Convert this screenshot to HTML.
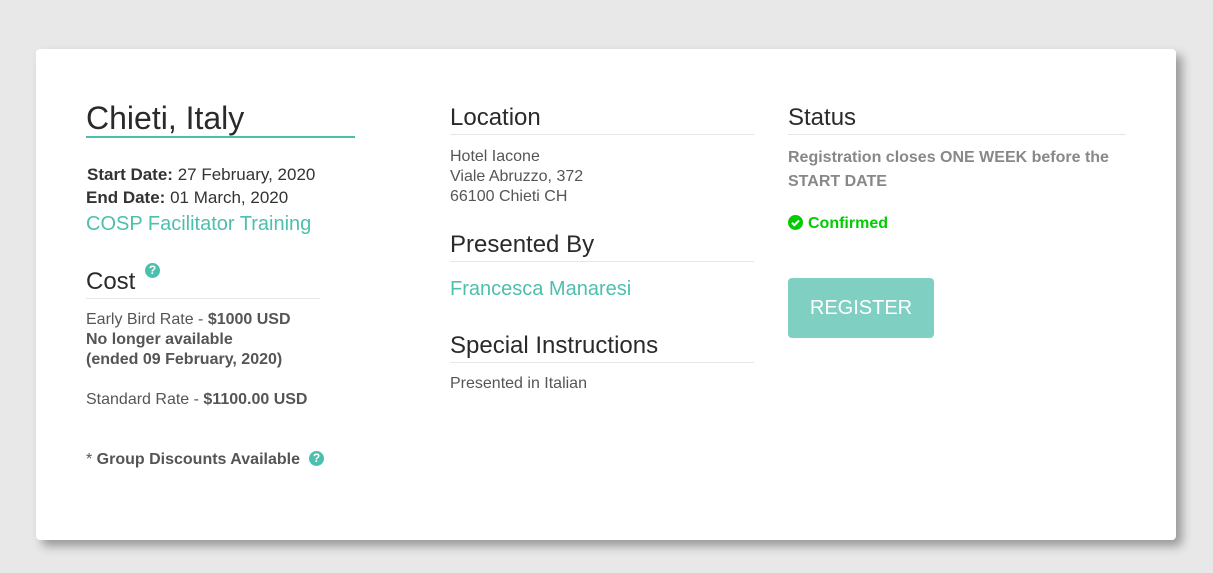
<!DOCTYPE html>
<html><head><meta charset="utf-8"><style>
*{margin:0;padding:0;box-sizing:border-box}
body{width:1213px;height:573px;background:#e8e8e8;font-family:"Liberation Sans",Arial,sans-serif;position:relative;overflow:hidden}
.card{position:absolute;left:36px;top:49px;width:1140px;height:491px;background:#fff;border-radius:4px;box-shadow:6px 6px 10px rgba(0,0,0,.35)}
.t{position:absolute;white-space:nowrap;line-height:1}
.rule{position:absolute;height:1px;background:#e6e6e6}
.q{display:inline-block;width:15px;height:15px;border-radius:50%;background:#4dbfad;color:#fff;font-size:12px;font-weight:bold;text-align:center;line-height:15px;vertical-align:top}
</style></head><body>
<div class="card"></div>

<div class="t" style="left:86px;top:102px;font-size:32px;color:#2a2a2a">Chieti, Italy</div>
<div style="position:absolute;left:86px;top:136px;width:269px;height:2px;background:#4dbfad"></div>
<div class="t" style="left:87px;top:166px;font-size:17px;color:#333"><b>Start Date:</b> 27 February, 2020</div>
<div class="t" style="left:86px;top:189px;font-size:17px;color:#333"><b>End Date:</b> 01 March, 2020</div>
<div class="t" style="left:86px;top:214px;font-size:20px;color:#4dbfad">COSP Facilitator Training</div>
<div class="t" style="left:86px;top:270px;font-size:24px;color:#2a2a2a">Cost</div>
<div class="q" style="position:absolute;left:145px;top:263px">?</div>
<div class="rule" style="left:86px;top:298px;width:234px"></div>
<div class="t" style="left:86px;top:312px;font-size:16px;color:#555">Early Bird Rate - <b>$1000 USD</b></div>
<div class="t" style="left:86px;top:332px;font-size:16px;color:#555;font-weight:bold">No longer available</div>
<div class="t" style="left:86px;top:352px;font-size:16px;color:#555;font-weight:bold">(ended 09 February, 2020)</div>
<div class="t" style="left:86px;top:392px;font-size:16px;color:#555">Standard Rate - <b>$1100.00 USD</b></div>
<div class="t" style="left:86px;top:452px;font-size:16px;color:#555">* <b>Group Discounts Available</b></div>
<div class="q" style="position:absolute;left:309px;top:451px">?</div>

<div class="t" style="left:450px;top:106px;font-size:24px;color:#2a2a2a">Location</div>
<div class="rule" style="left:450px;top:134px;width:304px"></div>
<div class="t" style="left:450px;top:149px;font-size:16px;color:#555">Hotel Iacone</div>
<div class="t" style="left:450px;top:169px;font-size:16px;color:#555">Viale Abruzzo, 372</div>
<div class="t" style="left:450px;top:189px;font-size:16px;color:#555">66100 Chieti CH</div>
<div class="t" style="left:450px;top:233px;font-size:24px;color:#2a2a2a">Presented By</div>
<div class="rule" style="left:450px;top:261px;width:304px"></div>
<div class="t" style="left:450px;top:279px;font-size:20px;color:#4dbfad">Francesca Manaresi</div>
<div class="t" style="left:450px;top:334px;font-size:24px;color:#2a2a2a">Special Instructions</div>
<div class="rule" style="left:450px;top:362px;width:304px"></div>
<div class="t" style="left:450px;top:376px;font-size:16px;color:#555">Presented in Italian</div>

<div class="t" style="left:788px;top:106px;font-size:24px;color:#2a2a2a">Status</div>
<div class="rule" style="left:788px;top:134px;width:338px"></div>
<div class="t" style="left:788px;top:150px;font-size:16px;color:#888;font-weight:bold">Registration closes ONE WEEK before the</div>
<div class="t" style="left:788px;top:174px;font-size:16px;color:#888;font-weight:bold">START DATE</div>
<svg style="position:absolute;left:788px;top:215px" width="15" height="15" viewBox="0 0 16 16"><circle cx="8" cy="8" r="8" fill="#0c0"/><path d="M4.3 8.3l2.5 2.5 5-5" stroke="#fff" stroke-width="2.2" fill="none"/></svg>
<div class="t" style="left:808px;top:216px;font-size:16px;color:#0c0;font-weight:bold">Confirmed</div>
<div style="position:absolute;left:788px;top:278px;width:146px;height:60px;background:#80cfc3;border-radius:4px;color:#fff;font-size:20px;text-align:center;line-height:60px">REGISTER</div>
</body></html>
